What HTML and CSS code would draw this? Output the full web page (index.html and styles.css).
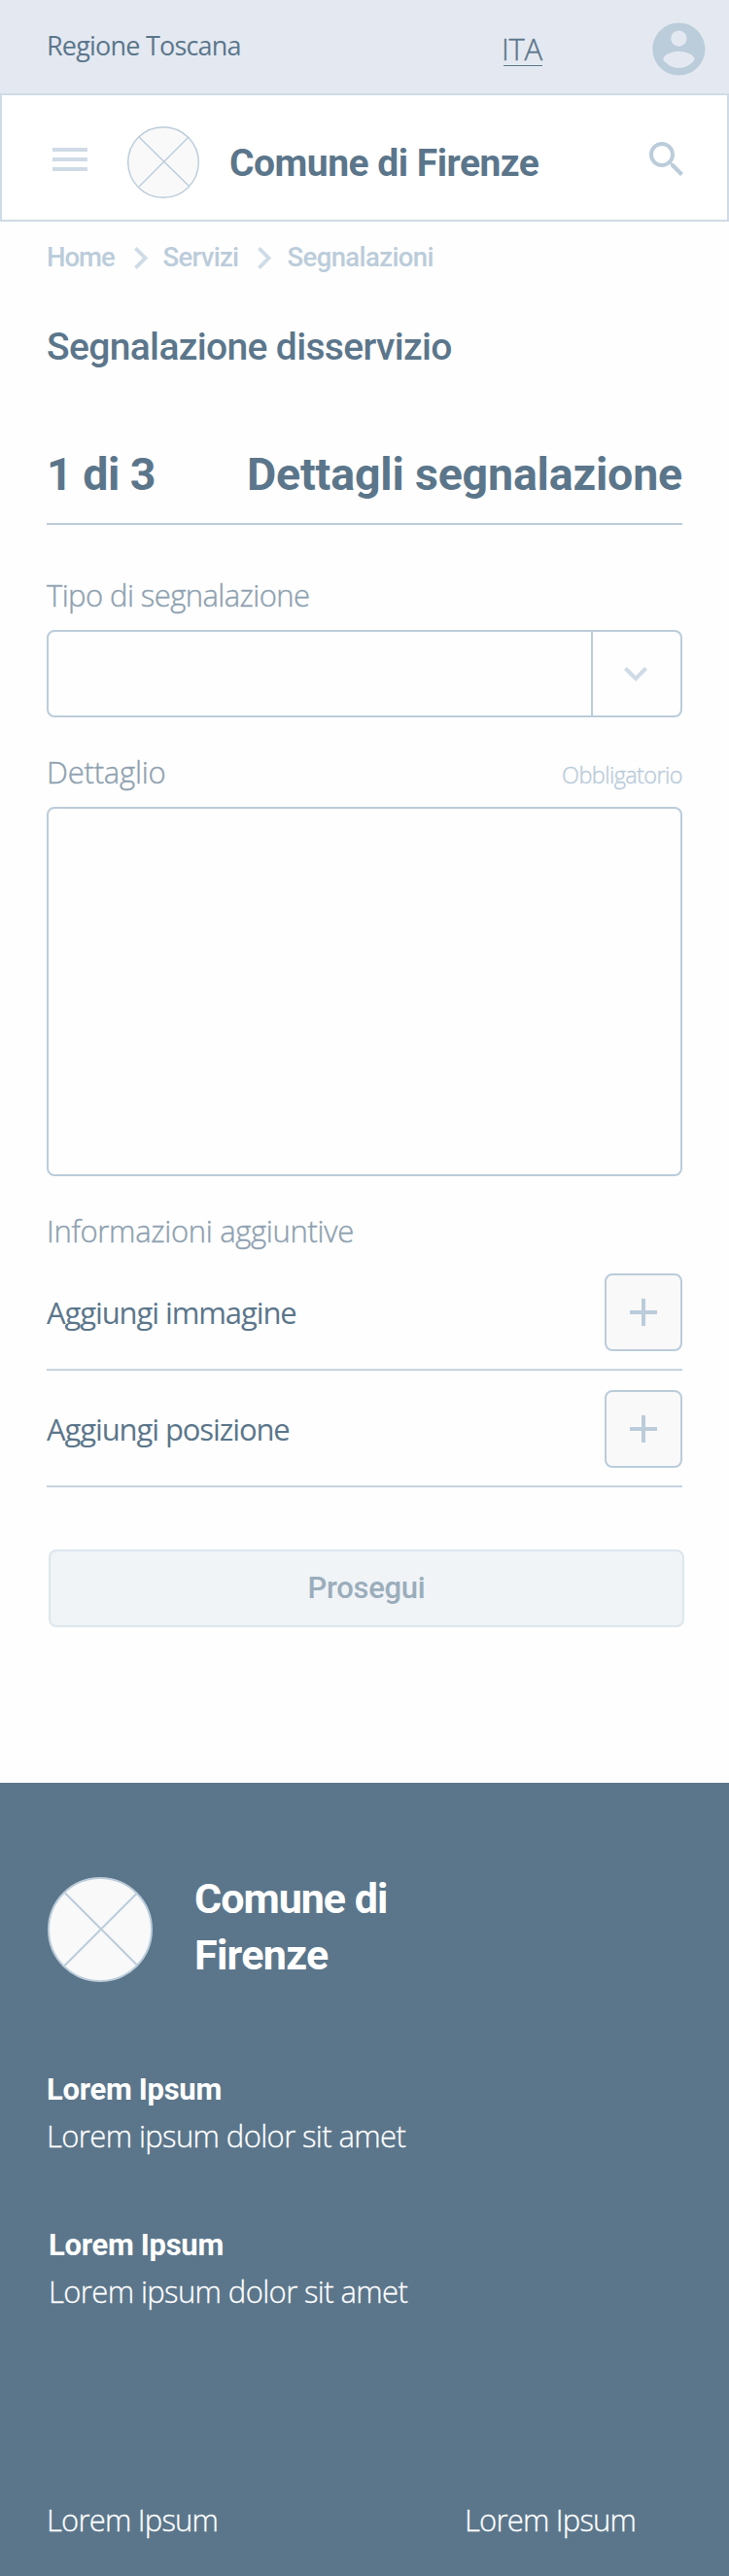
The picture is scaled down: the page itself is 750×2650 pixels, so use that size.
FILE: index.html
```html
<!DOCTYPE html>
<html lang="it">
<head>
<meta charset="utf-8">
<title>Segnalazione disservizio</title>
<link rel="stylesheet" href="styles.css">
</head>
<body>
<div class="topbar">
  <span class="region">Regione Toscana</span>
  <a class="lang">ITA</a>
  <svg class="user" viewBox="0 0 24 24"><path d="M12 2C6.480 2 2 6.480 2 12s4.480 10 10 10 10-4.480 10-10S17.520 2 12 2zm0 3c1.660 0 3 1.340 3 3s-1.340 3-3 3-3-1.340-3-3 1.340-3 3-3zm0 14.200c-2.500 0-4.710-1.280-6-3.220.030-1.990 4-3.080 6-3.080 1.990 0 5.970 1.090 6 3.080-1.290 1.940-3.500 3.220-6 3.220z"/></svg>
</div>
<header class="header">
  <svg class="burger" viewBox="0 0 36 24"><path d="M0 0h36v4H0zM0 10h36v4H0zM0 20h36v4H0z"/></svg>
  <svg class="logo" viewBox="0 0 74 74"><circle cx="37" cy="37" r="36.300"/><path d="M12 11l51 50M12 62l51-51"/></svg>
  <h1 class="brand">Comune di Firenze</h1>
  <svg class="search" viewBox="0 0 24 24"><path d="M15.500 14h-.79l-.28-.27C15.410 12.590 16 11.110 16 9.500 16 5.910 13.090 3 9.500 3S3 5.910 3 9.500 5.910 16 9.500 16c1.610 0 3.090-.59 4.230-1.570l.27.28v.79l5 4.990L20.490 19l-4.990-5zm-6 0C7.010 14 5 11.990 5 9.500S7.010 5 9.500 5 14 7.010 14 9.500 11.990 14 9.500 14z"/></svg>
</header>
<main class="main">
  <nav class="crumbs">
    <a class="crumb crumb-home">Home</a>
    <svg class="sep" viewBox="8.590 6 7.410 12"><path d="M10 6L8.590 7.410 13.170 12l-4.580 4.590L10 18l6-6z"/></svg>
    <a class="crumb crumb-services">Servizi</a>
    <svg class="sep" viewBox="8.590 6 7.410 12"><path d="M10 6L8.590 7.410 13.170 12l-4.580 4.590L10 18l6-6z"/></svg>
    <a class="crumb">Segnalazioni</a>
  </nav>
  <h2 class="title">Segnalazione disservizio</h2>
  <div class="step"><span class="step-count">1 di 3</span><span>Dettagli segnalazione</span></div>
  <div class="label label-type"><span>Tipo di segnalazione</span></div>
  <div class="select">
    <div class="select-toggle"><svg class="arrow" viewBox="6 8.590 12 7.410"><path d="M16.590 8.590L12 13.170 7.410 8.590 6 10l6 6 6-6z"/></svg></div>
  </div>
  <div class="label label-detail"><span>Dettaglio</span><span class="required">Obbligatorio</span></div>
  <div class="textarea"></div>
  <div class="label label-info"><span>Informazioni aggiuntive</span></div>
  <div class="row row-first"><span>Aggiungi immagine</span>
    <div class="add"><svg class="plus" viewBox="0 0 28 28"><path d="M12 0h4v12h12v4H16v12h-4V16H0v-4h12z"/></svg></div></div>
  <div class="row"><span>Aggiungi posizione</span>
    <div class="add"><svg class="plus" viewBox="0 0 28 28"><path d="M12 0h4v12h12v4H16v12h-4V16H0v-4h12z"/></svg></div></div>
  <div class="submit">Prosegui</div>
</main>
<footer class="footer">
  <div class="footer-brand">
    <svg class="footer-logo" viewBox="0 0 108 108"><circle cx="54" cy="54" r="53"/><path d="M18 16.500L92 90.500M17 91.500L91.500 17"/></svg>
    <div class="footer-name"><div class="name-top">Comune di</div><div class="name-bottom">Firenze</div></div>
  </div>
  <div class="info"><div class="info-title">Lorem Ipsum</div><div class="info-text">Lorem ipsum dolor sit amet</div></div>
  <div class="info info-second"><div class="info-title">Lorem Ipsum</div><div class="info-text">Lorem ipsum dolor sit amet</div></div>
  <div class="links"><a>Lorem Ipsum</a><a>Lorem Ipsum</a></div>
</footer>
</body>
</html>
```
FILE: styles.css
```css
* { box-sizing: border-box; }
body { margin: 0; background: #fefefe; color: #5b768b; font: 400 31px "Open Sans", sans-serif; white-space: nowrap; }
svg { display: block; flex: none; fill: #bbccda; }
h1, h2 { margin: 0; }

.topbar { display: flex; align-items: flex-start; height: 96px; padding-left: 48px; background: #e4e9f1; }
.region { width: 470px; margin-top: 22px; font-size: 27px; line-height: 49px; letter-spacing: -0.8px; }
.lang { width: 40px; height: 38px; margin-top: 30px; font-weight: 300; line-height: 40px; letter-spacing: -0.3px; border-bottom: 1px solid #5b768b; text-indent: -2px; -webkit-text-stroke: 0.4px; }
.user { width: 64.8px; height: 64.8px; margin: 17.600px 0 0 107.600px; }

.header { display: flex; align-items: flex-start; height: 132px; border: 2px solid #cfdbe6; background: #fff; }
.burger { width: 36px; height: 24px; margin: 54px 0 0 52px; fill: #cfdbe6; }
.logo { width: 74px; height: 74px; margin: 31.500px 0 0 41px; }
.logo circle, .footer-logo circle { fill: #f9f9f9; stroke: #bbccda; stroke-width: 1.400; }
.logo path, .footer-logo path { stroke: #bbccda; stroke-width: 1.400; }
.brand { width: 424px; margin: 40px 0 0 31px; font: 700 39px/60px Roboto, sans-serif; letter-spacing: -0.5px; }
.search { width: 48px; height: 48px; margin: 42px 0 0 2px; }

.main { padding: 0 48px 160px; }
.crumbs { display: flex; align-items: center; height: 72px; color: #bbccda; font: 500 27.500px/40px Roboto, sans-serif; }
.crumb { margin-top: 1px; letter-spacing: -0.6px; }
.crumb-home { width: 89.500px; letter-spacing: -1px; }
.crumb-services { width: 98px; letter-spacing: -0.7px; }
.sep { width: 14.300px; height: 23px; margin: 3px 15.700px 0 0; fill: #cfdbe6; }
.title { margin-top: 29px; font: 500 39px/56px Roboto, sans-serif; letter-spacing: -0.65px; }
.step { display: flex; justify-content: space-between; margin-top: 73px; padding-bottom: 20px; border-bottom: 2px solid #bbccda; font: 700 46.500px/60px Roboto, sans-serif; letter-spacing: -0.17px; }
.step-count { letter-spacing: -0.5px; }

.label { display: flex; align-items: baseline; justify-content: space-between; height: 40px; margin-top: 36px; color: #8ea1b0; font-weight: 300; line-height: 40px; -webkit-text-stroke: 0.4px; }
.label-type { margin-top: 52px; letter-spacing: -0.58px; }
.label-detail { letter-spacing: -0.2px; }
.label-info { letter-spacing: -0.32px; }
.required { color: #bbccda; font-size: 23.500px; letter-spacing: -0.6px; }
.select, .textarea { margin-top: 16px; border: 2px solid #bbccda; border-radius: 8px; }
.select { display: flex; justify-content: flex-end; height: 90px; }
.select-toggle { display: flex; align-items: center; justify-content: center; width: 92px; border-left: 2px solid #bbccda; padding-right: 2px; }
.arrow { width: 24px; height: 15px; fill: #cfdbe6; }
.textarea { height: 380px; }

.row { display: flex; align-items: center; justify-content: space-between; height: 120px; padding-top: 1px; border-bottom: 1px solid #bbccda; box-shadow: inset 0 -1px #d0dde7; letter-spacing: -1.1px; }
.row-first { height: 124px; padding-top: 5px; }
.add { display: flex; align-items: center; justify-content: center; width: 80px; height: 80px; border: 2px solid #bbccda; border-radius: 8px; background: #f9f9f9; }
.plus { width: 28px; height: 28px; }
.submit { height: 80px; margin: 64px -2px 0 2px; border: 2px solid #dde6ed; border-radius: 8px; background: #f0f4f7; color: #9badbb; font: 500 31px/76px Roboto, sans-serif; letter-spacing: -0.3px; text-align: center; }

.footer { height: 816px; padding: 90px 48px 0; background: #5b768b; color: #fff; }
.footer-brand { display: flex; height: 116px; }
.footer-logo { width: 108px; height: 108px; margin: 7px 43px 0 1px; }
.footer-logo circle, .footer-logo path { stroke-width: 2; }
.footer-name { font: 700 43px/58px Roboto, sans-serif; letter-spacing: -1px; }
.name-bottom { letter-spacing: -0.7px; }
.info { margin-top: 86px; }
.info-second { margin: 65px 0 0 2px; }
.info-title { font: 700 31px/47px Roboto, sans-serif; letter-spacing: -0.3px; }
.info-text { font-weight: 300; line-height: 48px; letter-spacing: -0.62px; -webkit-text-stroke: 0.3px; }
.links { display: grid; grid-template-columns: 430px 1fr; margin-top: 187px; font-weight: 300; line-height: 48px; letter-spacing: -0.8px; -webkit-text-stroke: 0.3px; }
```
